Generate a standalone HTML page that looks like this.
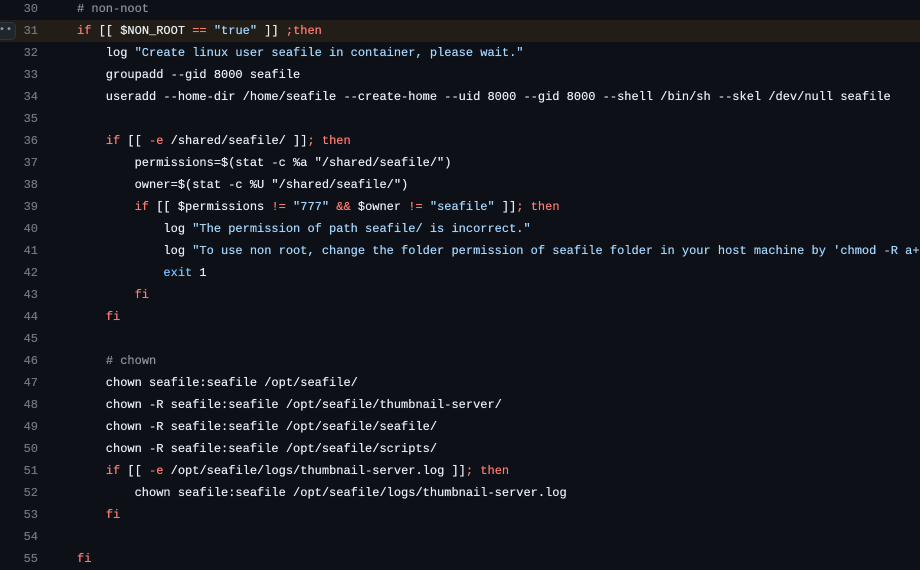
<!DOCTYPE html>
<html><head><meta charset="utf-8"><style>
html,body{margin:0;padding:0;background:#0d1117;width:920px;height:554px;overflow:hidden}
.c{position:absolute;top:-2px;left:0;width:920px;font-family:"Liberation Mono",monospace;font-size:12px;color:#e6edf3;text-shadow:0 0 0.4px currentColor}
.l{height:22px;line-height:22px;position:relative;white-space:pre}
.n{position:absolute;left:0;width:38px;text-align:right;color:#6e7681}
.t{position:absolute;left:77px}
.hl{background:#221e17}
.k{color:#ff7b72}.s{color:#a5d6ff}.m{color:#8b949e}.b{color:#79c0ff}
.dots{position:absolute;left:-4px;top:2px;width:20px;height:18px;border:1px solid #30363d;border-radius:5px;background:#21262d;color:#8b949e;font-size:10px;line-height:15px;text-align:right;padding-right:2px;box-sizing:border-box;letter-spacing:1px}
</style></head><body><div class="c">
<div class="l"><span class="n">30</span><span class="t"><span class="m"># non-noot</span></span></div>
<div class="l hl"><div class="dots">••</div><span class="n">31</span><span class="t"><span class="k">if</span> [[ $NON_ROOT <span class="k">==</span> <span class="s">"true"</span> ]] <span class="k">;then</span></span></div>
<div class="l"><span class="n">32</span><span class="t">    log <span class="s">"Create linux user seafile in container, please wait."</span></span></div>
<div class="l"><span class="n">33</span><span class="t">    groupadd --gid 8000 seafile</span></div>
<div class="l"><span class="n">34</span><span class="t">    useradd --home-dir /home/seafile --create-home --uid 8000 --gid 8000 --shell /bin/sh --skel /dev/null seafile</span></div>
<div class="l"><span class="n">35</span><span class="t"></span></div>
<div class="l"><span class="n">36</span><span class="t">    <span class="k">if</span> [[ <span class="k">-e</span> /shared/seafile/ ]]<span class="k">; then</span></span></div>
<div class="l"><span class="n">37</span><span class="t">        permissions=$(stat -c %a "/shared/seafile/")</span></div>
<div class="l"><span class="n">38</span><span class="t">        owner=$(stat -c %U "/shared/seafile/")</span></div>
<div class="l"><span class="n">39</span><span class="t">        <span class="k">if</span> [[ $permissions <span class="k">!=</span> <span class="s">"777"</span> <span class="k">&amp;&amp;</span> $owner <span class="k">!=</span> <span class="s">"seafile"</span> ]]<span class="k">; then</span></span></div>
<div class="l"><span class="n">40</span><span class="t">            log <span class="s">"The permission of path seafile/ is incorrect."</span></span></div>
<div class="l"><span class="n">41</span><span class="t">            log <span class="s">"To use non root, change the folder permission of seafile folder in your host machine by 'chmod -R a+rwx'"</span></span></div>
<div class="l"><span class="n">42</span><span class="t">            <span class="b">exit</span> 1</span></div>
<div class="l"><span class="n">43</span><span class="t">        <span class="k">fi</span></span></div>
<div class="l"><span class="n">44</span><span class="t">    <span class="k">fi</span></span></div>
<div class="l"><span class="n">45</span><span class="t"></span></div>
<div class="l"><span class="n">46</span><span class="t">    <span class="m"># chown</span></span></div>
<div class="l"><span class="n">47</span><span class="t">    chown seafile:seafile /opt/seafile/</span></div>
<div class="l"><span class="n">48</span><span class="t">    chown -R seafile:seafile /opt/seafile/thumbnail-server/</span></div>
<div class="l"><span class="n">49</span><span class="t">    chown -R seafile:seafile /opt/seafile/seafile/</span></div>
<div class="l"><span class="n">50</span><span class="t">    chown -R seafile:seafile /opt/seafile/scripts/</span></div>
<div class="l"><span class="n">51</span><span class="t">    <span class="k">if</span> [[ <span class="k">-e</span> /opt/seafile/logs/thumbnail-server.log ]]<span class="k">; then</span></span></div>
<div class="l"><span class="n">52</span><span class="t">        chown seafile:seafile /opt/seafile/logs/thumbnail-server.log</span></div>
<div class="l"><span class="n">53</span><span class="t">    <span class="k">fi</span></span></div>
<div class="l"><span class="n">54</span><span class="t"></span></div>
<div class="l"><span class="n">55</span><span class="t"><span class="k">fi</span></span></div>
</div></body></html>
